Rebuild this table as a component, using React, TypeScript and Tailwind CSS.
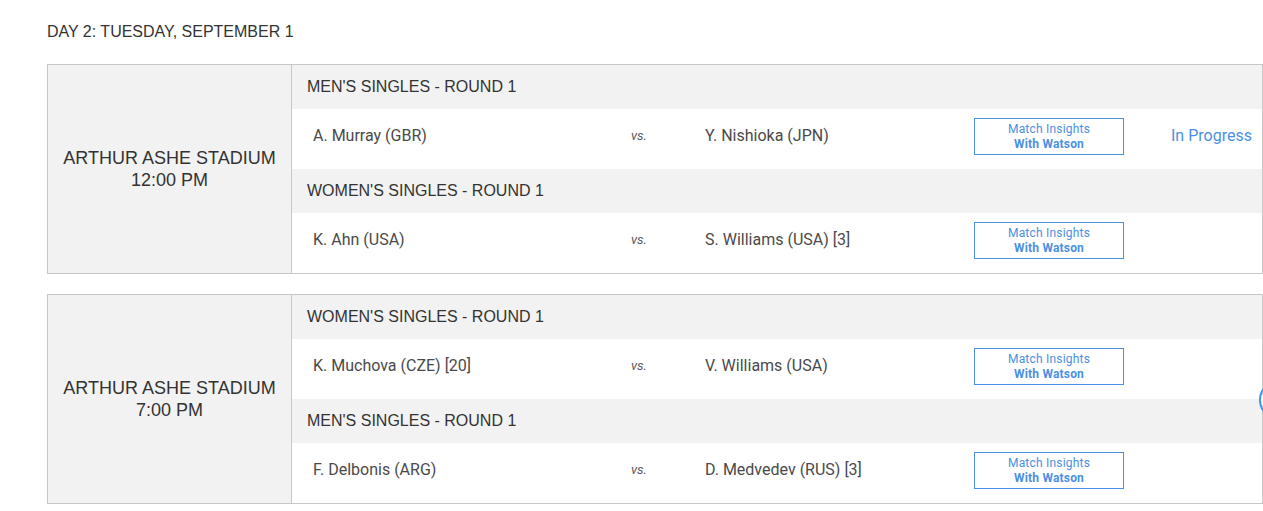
import React from "react";

type Match = { p1: string; p2: string; status?: string };
type Group = { title: string; match: Match };
type Block = { time: string; groups: Group[] };

const blocks: Block[] = [
  {
    time: "12:00 PM",
    groups: [
      { title: "MEN'S SINGLES - ROUND 1", match: { p1: "A. Murray (GBR)", p2: "Y. Nishioka (JPN)", status: "In Progress" } },
      { title: "WOMEN'S SINGLES - ROUND 1", match: { p1: "K. Ahn (USA)", p2: "S. Williams (USA) [3]" } },
    ],
  },
  {
    time: "7:00 PM",
    groups: [
      { title: "WOMEN'S SINGLES - ROUND 1", match: { p1: "K. Muchova (CZE) [20]", p2: "V. Williams (USA)" } },
      { title: "MEN'S SINGLES - ROUND 1", match: { p1: "F. Delbonis (ARG)", p2: "D. Medvedev (RUS) [3]" } },
    ],
  },
];

function Row({ m }: { m: Match }) {
  return (
    <div className="flex h-[60px] items-center bg-white pb-[6px] pl-[21px] font-['Roboto',sans-serif] text-[16px] text-[#4a4a4a]">
      <div className="w-[318px]">{m.p1}</div>
      <div className="w-[74px] text-[13px] italic text-[#555]">vs.</div>
      <div className="w-[269px]">{m.p2}</div>
      <div className="flex h-[37px] w-[150px] flex-col items-center justify-center border border-[#4a90e2] pt-[2px] font-['Roboto',sans-serif] text-[12px] leading-[15px] tracking-[0.2px] text-[#4a90e2]">
        <span>Match Insights</span>
        <span className="font-bold">With Watson</span>
      </div>
      {m.status && (
        <div className="ml-[47px] font-['Roboto',sans-serif] text-[16px] text-[#4a90e2]">{m.status}</div>
      )}
    </div>
  );
}

export default function App() {
  return (
    <div className="relative min-h-[511px] w-[1263px] overflow-hidden bg-white font-['Liberation_Sans',Arial,sans-serif] text-[#333]">
      <div className="pl-[47px] pt-[23px]">
        <div className="h-[41px] text-[16px] leading-[18px]">DAY 2: TUESDAY, SEPTEMBER 1</div>
        <div className="flex flex-col gap-[20px]">
          {blocks.map((b, i) => (
            <div key={i} className="flex w-[1216px] border border-[#c8c8c8]">
              <div className="flex w-[244px] flex-col items-center justify-center border-r border-[#c8c8c8] bg-[#f2f2f2] text-center text-[18px] leading-[22px] text-[#333]">
                <div>ARTHUR ASHE STADIUM</div>
                <div>{b.time}</div>
              </div>
              <div className="flex flex-1 flex-col">
                {b.groups.map((g, j) => (
                  <React.Fragment key={j}>
                    <div className="flex h-[44px] items-center bg-[#f2f2f2] pl-[15px] text-[16px] text-[#333]">{g.title}</div>
                    <Row m={g.match} />
                  </React.Fragment>
                ))}
              </div>
            </div>
          ))}
        </div>
      </div>
      <div className="absolute left-[1259px] top-[380px] h-[40px] w-[40px] rounded-full border-2 border-[#4a90e2] bg-white" />
    </div>
  );
}
